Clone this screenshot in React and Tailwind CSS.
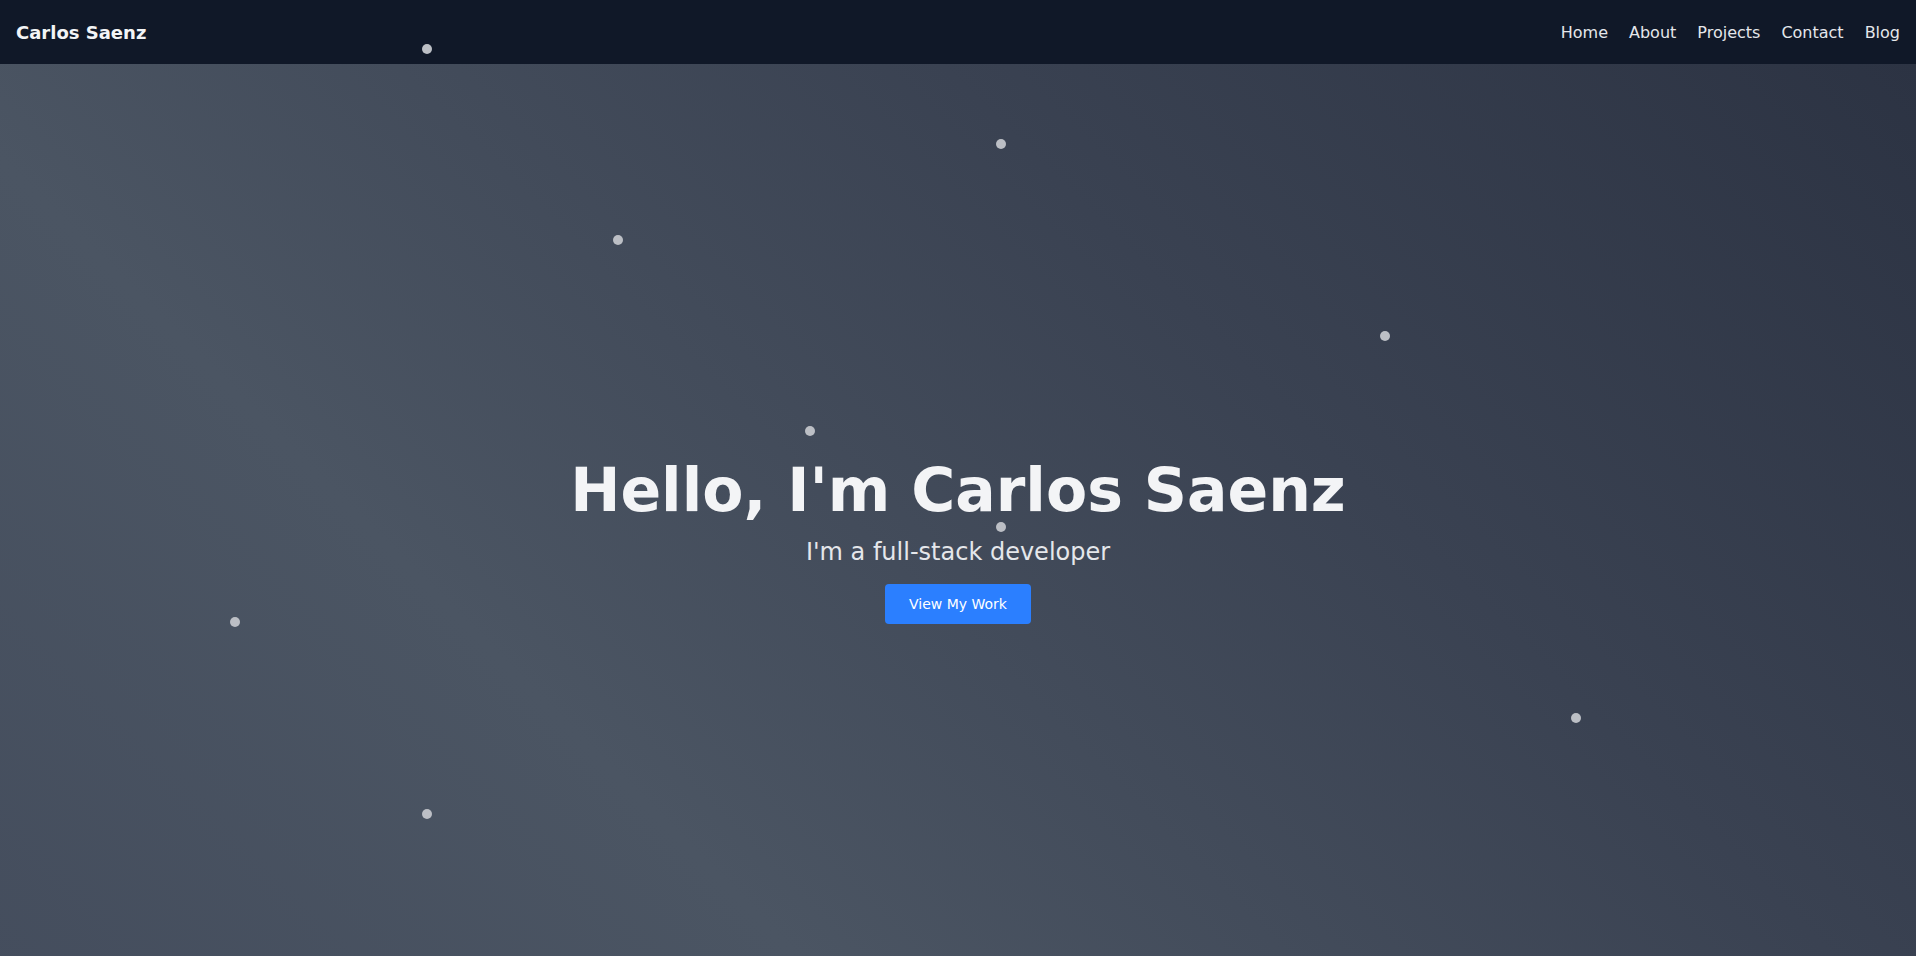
import React from "react";

const links = ["Home", "About", "Projects", "Contact", "Blog"];

// particle dots: [left %, top %]
const dots = [
  ["left-[22%]", "top-[5%]"],
  ["left-[52%]", "top-[15%]"],
  ["left-[32%]", "top-[25%]"],
  ["left-[72%]", "top-[35%]"],
  ["left-[42%]", "top-[45%]"],
  ["left-[52%]", "top-[55%]"],
  ["left-[12%]", "top-[65%]"],
  ["left-[82%]", "top-[75%]"],
  ["left-[22%]", "top-[85%]"],
];

export default function App() {
  return (
    <div className="min-h-screen font-['DejaVu_Sans',sans-serif] bg-gray-900">
      {/* Navbar */}
      <nav className="h-16 bg-gray-900 px-4 pt-0.5 flex items-center justify-between">
        <a href="#" className="text-lg font-bold text-gray-100">
          Carlos Saenz
        </a>
        <div className="flex items-center gap-[21px]">
          {links.map((l) => (
            <a key={l} href="#" className="text-base text-gray-200 hover:text-white">
              {l}
            </a>
          ))}
        </div>
      </nav>

      {/* Hero */}
      <section className="h-screen bg-[linear-gradient(45deg,#444d5d_0%,#4b5563_30%,#3a4252_66%,#2c3343_100%)] flex flex-col items-center justify-center text-center">
        <h1 className="text-6xl font-bold text-gray-100 mb-4">
          Hello, I'm Carlos Saenz
        </h1>
        <p className="text-2xl text-gray-200 mb-4">I'm a full-stack developer</p>
        <a
          href="#projects"
          className="bg-blue-500 text-white text-sm px-6 py-2.5 rounded hover:bg-blue-600"
        >
          View My Work
        </a>
      </section>

      {/* Particles */}
      <div className="fixed inset-0 pointer-events-none z-50">
        {dots.map(([l, t], i) => (
          <span
            key={i}
            className={`absolute ${l} ${t} -translate-y-1 w-2.5 h-2.5 rounded-full bg-[#bcbfc5]`}
          />
        ))}
      </div>
    </div>
  );
}
